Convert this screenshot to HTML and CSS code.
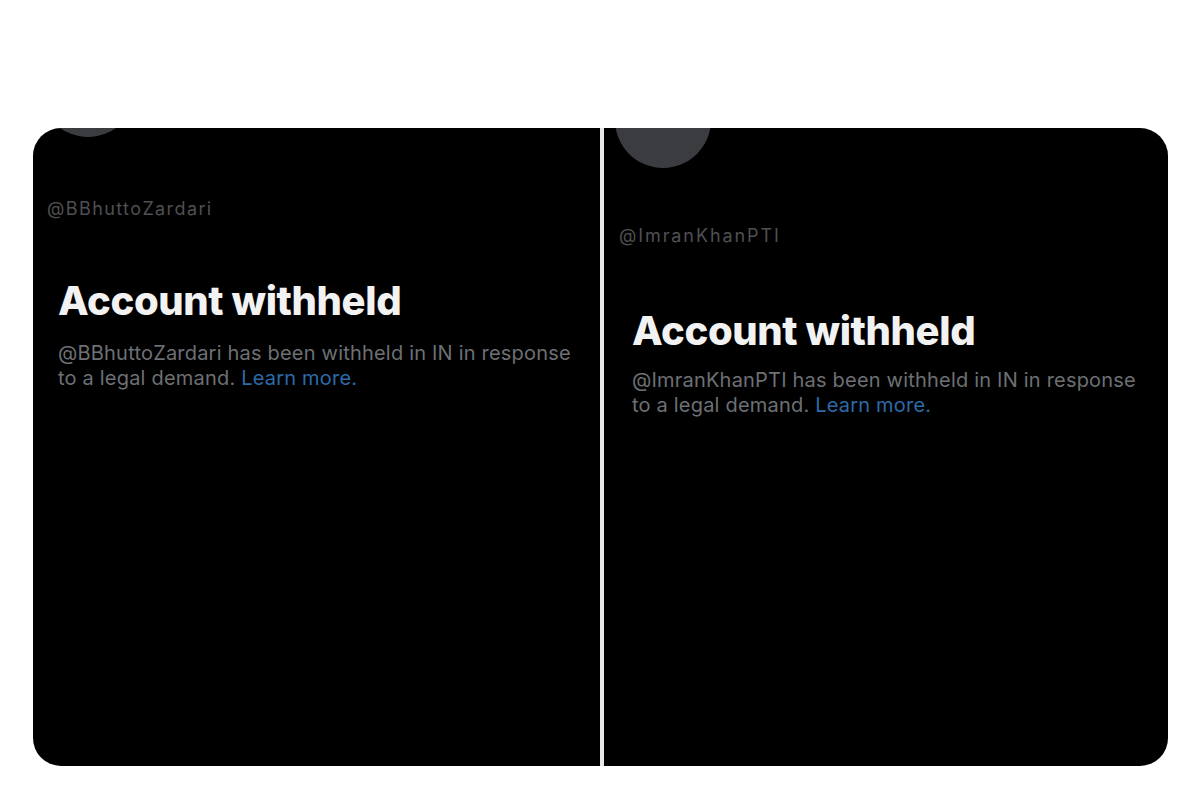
FILE: index.html
```html
<!DOCTYPE html>
<html lang="en">
<head>
  <meta charset="UTF-8">
  <meta name="viewport" content="width=device-width, initial-scale=1.0">
  <title>Account withheld</title>
  <link rel="stylesheet" href="styles.css">
</head>
<body>
  <div class="frame">

    <div class="panel panel-left">
      <div class="avatar"></div>
      <div class="handle">@BBhuttoZardari</div>
      <h1 class="title">Account withheld</h1>
      <p class="notice">@BBhuttoZardari has been withheld in IN in response<br>to a legal demand. <span class="link">Learn more.</span></p>
    </div>

    <div class="panel panel-right">
      <div class="avatar"></div>
      <div class="handle">@ImranKhanPTI</div>
      <h1 class="title">Account withheld</h1>
      <p class="notice">@ImranKhanPTI has been withheld in IN in response<br>to a legal demand. <span class="link">Learn more.</span></p>
    </div>

  </div>
</body>
</html>
```

FILE: styles.css
```css
*{
  margin: 0;
  padding: 0;
  box-sizing: border-box;
}
body{
  background: #ffffff;
  font-family: Inter, "Liberation Sans", Arial, sans-serif;
}
.frame{
  margin: 128px 0 0 33px;
  width: 1135px;
  height: 638px;
  display: grid;
  grid-template-columns: 567px 564px;
  column-gap: 4px;
  border-radius: 28px;
  overflow: hidden;
  background: #e8e8e8;
}
.panel{
  background: #000000;
  overflow: hidden;
}
.avatar{
  width: 96px;
  height: 96px;
  border-radius: 50%;
  background: #3a3c3f;
}
.handle{
  color: #4e5053;
  font-size: 18px;
  line-height: 22px;
}
.title{
  color: #f2f2f2;
  font-size: 40px;
  font-weight: 800;
  letter-spacing: -0.4px;
  line-height: 50px;
}
.notice{
  box-sizing: content-box;
  width: 525px;
  color: #6d7074;
  font-size: 20px;
  line-height: 25px;
  letter-spacing: 0.2px;
}
.link{
  color: #2d6aa8;
}

/* left card */
.panel-left .avatar{
  margin: -87px 0 0 7px;
}
.panel-left .handle{
  margin-top: 61px;
  padding-left: 14px;
  letter-spacing: 1.4px;
}
.panel-left .title{
  margin-top: 56px;
  padding-left: 25px;
}
.panel-left .notice{
  margin-top: 15px;
  padding-left: 25px;
}

/* right card */
.panel-right .avatar{
  margin: -56px 0 0 11px;
}
.panel-right .handle{
  margin-top: 57px;
  padding-left: 15px;
  letter-spacing: 1.9px;
}
.panel-right .title{
  margin-top: 59px;
  padding-left: 28px;
}
.panel-right .notice{
  margin-top: 12px;
  padding-left: 28px;
}
```
